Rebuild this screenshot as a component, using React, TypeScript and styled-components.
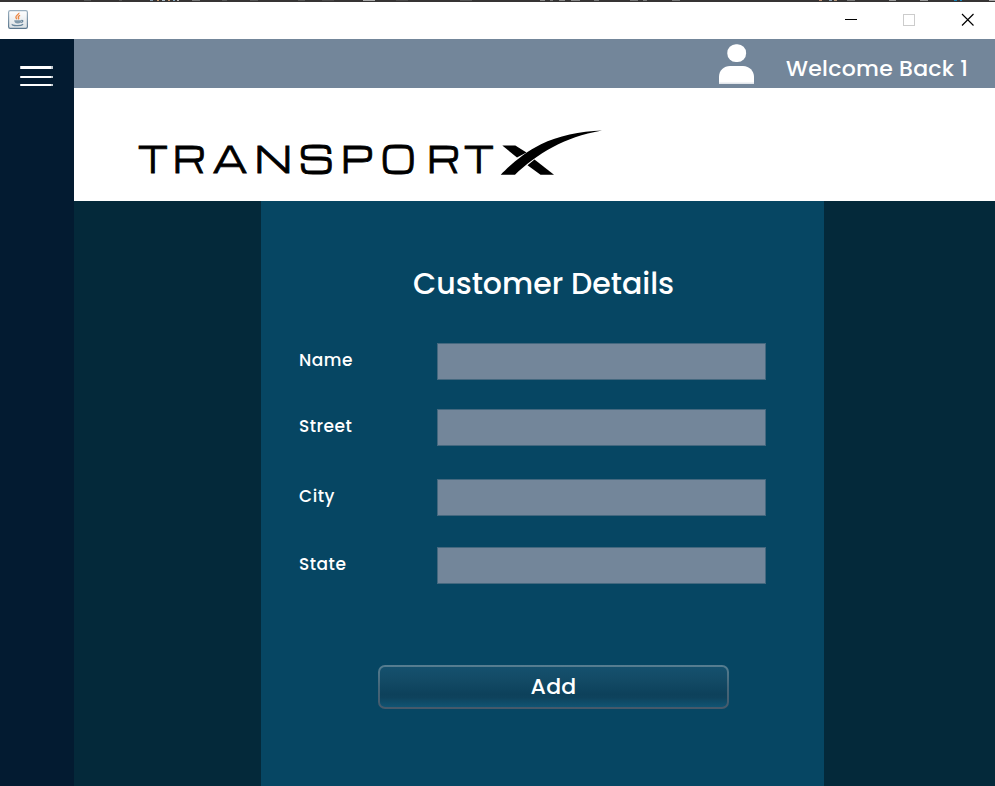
import React from "react";
import styled, { createGlobalStyle } from "styled-components";

const Global = createGlobalStyle`
  *, *::before, *::after { box-sizing: border-box; }
  body { margin: 0; background: #fff; }
`;

const Window = styled.div`
  width: 995px;
  height: 786px;
  display: flex;
  flex-direction: column;
  overflow: hidden;
  background: #fff;
  color: #fff;
  font-family: Poppins, Inter, "Noto Sans", sans-serif;
  font-feature-settings: "cv11" 1;
`;

const Backdrop = styled.div`
  flex: none;
  height: 2px;
  background: #363434;
  svg { display: block; }
`;

const TitleBar = styled.header`
  flex: none;
  height: 37px;
  display: flex;
  justify-content: space-between;
  padding: 8px 20px 0 8px;
`;

const WindowControls = styled.div`
  display: flex;
  gap: 44px;
  padding-top: 3px;
  svg { display: block; }
`;

const Workspace = styled.div`
  flex: 1;
  display: flex;
  min-height: 0;
`;

const Sidebar = styled.nav`
  width: 74px;
  flex: none;
  background: #031b31;
  padding: 27px 0 0 20px;
`;

const MenuButton = styled.button`
  display: flex;
  flex-direction: column;
  justify-content: space-between;
  width: 33px;
  height: 20px;
  padding: 0;
  border: 0;
  background: none;
`;

const MenuLine = styled.span<{ $thick?: boolean }>`
  display: block;
  width: 100%;
  height: ${(p) => (p.$thick ? 3 : 2)}px;
  background: linear-gradient(90deg, #c5ccd2 1px, #fff 1px 31px, #c5ccd2 31px);
`;

const Main = styled.main`
  flex: 1;
  display: flex;
  flex-direction: column;
`;

const UserBar = styled.div`
  height: 49px;
  flex: none;
  display: flex;
  justify-content: flex-end;
  padding: 5px 0 0;
  background: #73869a;
  svg { display: block; }
`;

const Welcome = styled.div`
  width: 209px;
  margin-left: 31px;
  padding-top: 9px;
  font-size: 22px;
  line-height: 32px;
  font-weight: 500;
  letter-spacing: 0.28px;
  white-space: nowrap;
`;

const Brand = styled.div`
  height: 113px;
  flex: none;
  padding: 37px 0 0 60px;
  background: #fff;
  svg { display: block; }
`;

const Content = styled.section`
  flex: 1;
  padding-left: 187px;
  background: #04293a;
`;

const Panel = styled.form`
  width: 563px;
  height: 100%;
  padding: 60px 58px 0 38px;
  background: #064663;
`;

const Heading = styled.h1`
  margin: 0 0 37px;
  padding-left: 114px;
  font-size: 30px;
  line-height: 45px;
  font-weight: 500;
  letter-spacing: 0;
  white-space: nowrap;
`;

const Field = styled.label<{ $gap: number }>`
  display: flex;
  align-items: flex-start;
  height: 37px;
  margin-bottom: ${(p) => p.$gap}px;
`;

const FieldName = styled.span`
  width: 138px;
  padding-top: 5px;
  font-size: 17px;
  line-height: 24px;
  font-weight: 500;
  letter-spacing: 0.5px;
`;

const FieldInput = styled.input`
  width: 329px;
  height: 37px;
  padding: 0 6px;
  border: 1px solid #44687f;
  border-radius: 0;
  background: #73869a;
  color: #fff;
  font: inherit;
  outline: none;
`;

const AddButton = styled.button`
  display: block;
  width: 351px;
  height: 44px;
  margin: 81px 0 0 79px;
  padding: 0;
  border: 2px solid transparent;
  border-radius: 7px;
  background:
    linear-gradient(#15516e 0%, #134b66 30%, #0d415b 68%, #0e425c 76%, #105473 100%) padding-box,
    linear-gradient(#567e91, #446679 50%, #46596a) border-box;
  color: #fff;
  font-family: inherit;
  font-feature-settings: inherit;
  font-size: 22px;
  line-height: 40px;
  font-weight: 500;
  letter-spacing: 0.2px;
`;

const specks: [number, number, string][] = [
  [84, 7, "#555"], [119, 3, "#555"], [150, 3, "#8299ac"], [157, 2, "#c3996f"], [162, 3, "#a7b8c4"],
  [168, 2, "#c3996f"], [173, 2, "#80a4bd"], [177, 2, "#bbb"], [192, 8, "#777"], [222, 5, "#555"],
  [250, 8, "#555"], [298, 7, "#555"], [322, 12, "#4b4949"], [363, 12, "#aaa"], [396, 12, "#4b4949"],
  [460, 12, "#555"], [540, 5, "#888"], [550, 3, "#777"], [559, 6, "#888"], [571, 9, "#888"],
  [594, 5, "#777"], [630, 8, "#777"], [643, 4, "#777"], [672, 8, "#777"], [819, 3, "#b98d72"],
  [829, 3, "#8ba0b1"], [834, 3, "#b4977a"], [847, 8, "#777"], [889, 7, "#999"], [920, 8, "#999"],
  [954, 3, "#1685b8"], [960, 2, "#1685b8"], [989, 6, "#aaa"],
];

const JavaIcon = () => (
  <svg width="20" height="20" viewBox="0 0 20 20">
    <defs>
      <linearGradient id="tile" x1="0" y1="0" x2="0" y2="1">
        <stop offset="0" stopColor="#fff" />
        <stop offset="1" stopColor="#dbe1e5" />
      </linearGradient>
      <linearGradient id="edge" x1="0" y1="0" x2="0" y2="1">
        <stop offset="0" stopColor="#9aafbf" />
        <stop offset="1" stopColor="#5c788f" />
      </linearGradient>
    </defs>
    <rect x=".6" y=".6" width="18.8" height="17.8" rx="1.6" fill="url(#tile)" stroke="url(#edge)" strokeWidth="1.2" />
    <path d="M10.9 2.8c.6 1.6-3.4 2.5-3 4.600.1.8.9 1.300 1.100 1.900M12.100 5.400c-1.900.8-2.300 1.500-1.600 2.300.5.7.2 1.200-.4 1.600" fill="none" stroke="#ec8642" strokeWidth="1.3" />
    <path d="M6.2 10.200h7c0 2.300-.9 3.300-3.400 3.300S6.500 12.400 6.200 10.200Z" fill="#8099aa" />
    <path d="M13.200 10.500c2.400-.7 2.200 1.800-.5 2M4.300 14c-1.500 1.900 8.500 2.500 10.800.3" fill="none" stroke="#67859b" strokeWidth="1.200" />
  </svg>
);

const BrandLogo = () => (
  <svg width="470" height="66" viewBox="134 125 470 66">
    <text
      transform="scale(.9 1)"
      x="152.800 192 236.200 283.200 332.200 379 423.300 474.400 514.900"
      y="173.500"
      fontFamily="Michroma, Orbitron, Inter, sans-serif"
      fontSize="36.500"
      fontWeight="400"
      fill="#000"
      stroke="#000"
      strokeWidth=".9"
    >
      TRANSPORT
    </text>
    <path
      d="M500.700 174.800C510 165 525 152 541 144.200C558 136 580 131 602 130.500C582 134 567 139.500 553 147C538 155 525 165 515 174.800Z"
      fill="#000"
    />
    <path d="M502.300 145.500H515.300L526.500 152.500L517 157.500Z" fill="#000" />
    <path d="M527.500 165.200L534.500 159.500L554 174.800H540.500Z" fill="#000" />
  </svg>
);

const PersonIcon = () => (
  <svg width="36" height="41" viewBox="0 0 36 41">
    <rect x="8.300" y=".2" width="18.800" height="17.800" rx="8.600" fill="#fff" />
    <path d="M0 40V33C0 26 5 22 11 22H24C30.500 22 35 27 35 33V40Z" fill="#fff" />
    <path d="M0 38.500H35V40H0Z" fill="#e2e6eb" />
  </svg>
);

const fields = [
  { name: "Name", gap: 29 },
  { name: "Street", gap: 33 },
  { name: "City", gap: 31 },
  { name: "State", gap: 0 },
];

export default function App() {
  return (
    <Window>
      <Global />
      <Backdrop>
        <svg width="995" height="2">
          {specks.map(([x, w, color]) => (
            <rect key={x} x={x} width={w} height="1" fill={color} />
          ))}
        </svg>
      </Backdrop>
      <TitleBar>
        <JavaIcon />
        <WindowControls>
          <svg width="14" height="14" viewBox="0 0 14 14" shapeRendering="crispEdges">
            <path d="M0 6.500H12" stroke="#000" />
          </svg>
          <svg width="14" height="14" viewBox="0 0 14 14" shapeRendering="crispEdges">
            <rect x=".5" y="1.500" width="11" height="11" fill="none" stroke="#ccc" />
          </svg>
          <svg width="14" height="14" viewBox="0 0 14 14">
            <path d="M1 1L12.500 12.500M12.500 1L1 12.500" stroke="#000" strokeWidth="1.150" />
          </svg>
        </WindowControls>
      </TitleBar>
      <Workspace>
        <Sidebar>
          <MenuButton type="button" aria-label="Menu">
            <MenuLine $thick />
            <MenuLine />
            <MenuLine />
          </MenuButton>
        </Sidebar>
        <Main>
          <UserBar>
            <PersonIcon />
            <Welcome>Welcome Back 1</Welcome>
          </UserBar>
          <Brand>
            <BrandLogo />
          </Brand>
          <Content>
            <Panel>
              <Heading>Customer Details</Heading>
              {fields.map((f) => (
                <Field key={f.name} $gap={f.gap}>
                  <FieldName>{f.name}</FieldName>
                  <FieldInput />
                </Field>
              ))}
              <AddButton type="button">Add</AddButton>
            </Panel>
          </Content>
        </Main>
      </Workspace>
    </Window>
  );
}
